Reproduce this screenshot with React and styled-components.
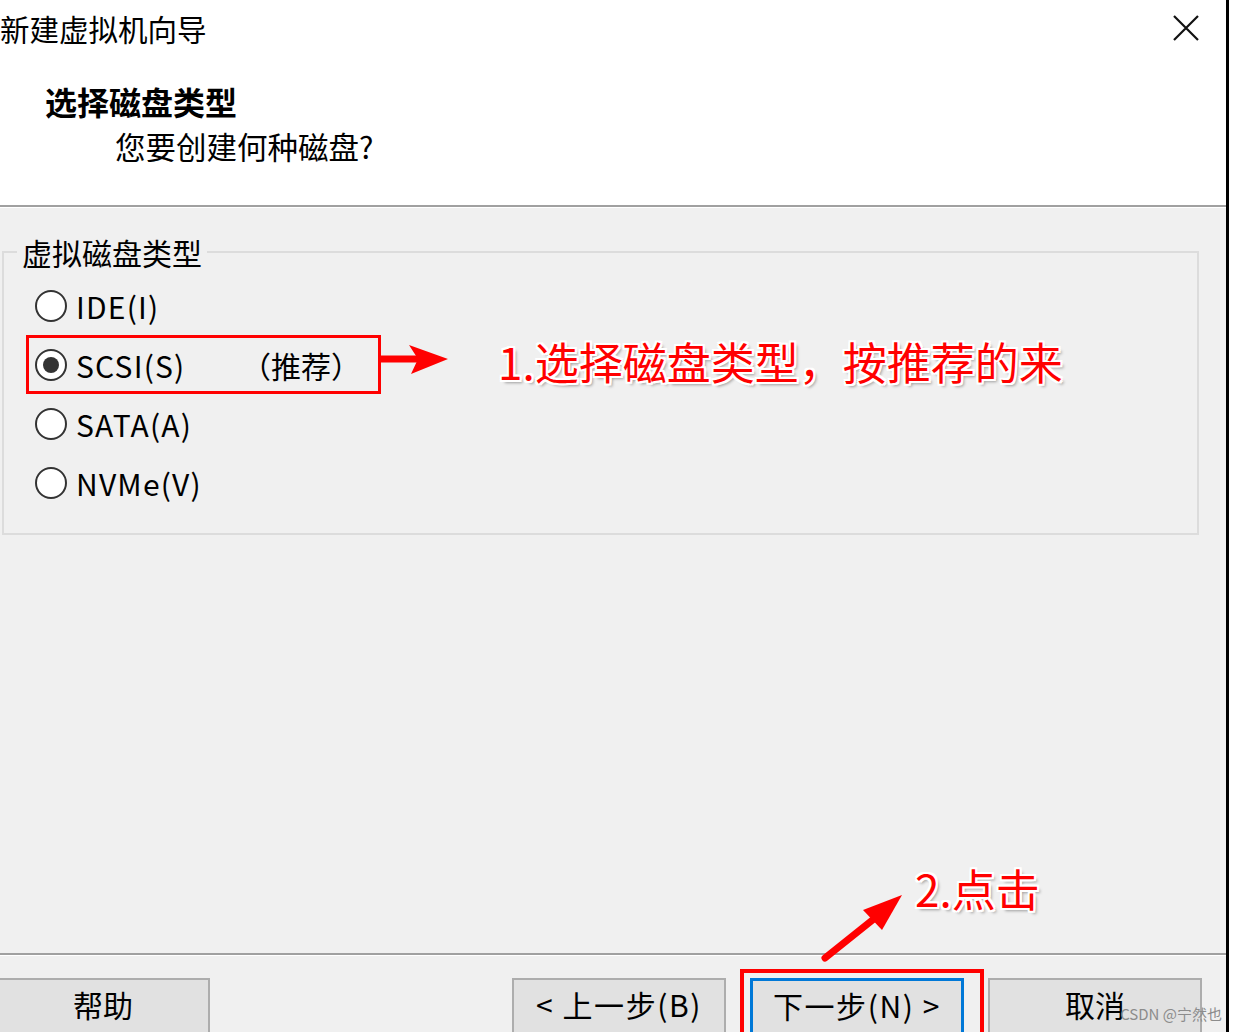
import React from "react";
import styled, { createGlobalStyle } from "styled-components";

const GlobalStyle = createGlobalStyle`
  html, body {
    margin: 0;
    padding: 0;
    background: #ffffff;
  }
  body {
    font-family: "Noto Sans CJK SC", "Liberation Sans", sans-serif;
    color: #000;
  }
`;

const Screen = styled.div`
  position: relative;
  display: flex;
  width: 1238px;
  height: 1032px;
  overflow: hidden;
  background: #ffffff;
`;

const Dialog = styled.div`
  display: flex;
  flex-direction: column;
  width: 1226px;
  height: 100%;
  background: #f0f0f0;
`;

const Edge = styled.div`
  width: 3px;
  height: 100%;
  background: #000;
`;

/* header */

const Header = styled.header`
  height: 205px;
  background: #ffffff;
`;

const TitleRow = styled.div`
  display: flex;
  align-items: center;
  justify-content: space-between;
  height: 56px;
  padding-right: 27px;
`;

const Title = styled.span`
  font-size: 29.5px;
  line-height: 40px;
`;

const Heading = styled.h1`
  margin: 25px 0 0 45px;
  font-size: 32px;
  line-height: 40px;
  font-weight: 700;
`;

const SubHeading = styled.p`
  margin: 5px 0 0 115px;
  font-size: 30.5px;
  line-height: 40px;
`;

const Rule = styled.div`
  height: 2px;
  background: #a0a0a0;
  box-shadow: 0 1px 0 #ffffff;
  flex: none;
`;

/* body */

const Body = styled.main`
  flex: 1;
  padding: 29px 27px 0 2px;
`;

const Group = styled.fieldset`
  margin: 0;
  padding: 0 0 21px 22px;
  border: 2px solid #dcdcdc;
`;

const Legend = styled.legend`
  margin-left: -9px;
  padding: 0 5px;
  font-size: 30px;
  line-height: 32px;
`;

const Options = styled.div`
  display: flex;
  flex-direction: column;
  margin-top: 8px;
`;

const Option = styled.label`
  display: flex;
  align-items: center;
  box-sizing: border-box;
  width: 355px;
  height: 59px;
  padding: 0 17px 0 6px;
  border: 3px solid ${(p) => (p.$marked ? "#ff0000" : "transparent")};
`;

const Radio = styled.span`
  display: flex;
  align-items: center;
  justify-content: center;
  box-sizing: border-box;
  width: 32px;
  height: 32px;
  border: 2px solid #333333;
  border-radius: 50%;
  background: #ffffff;
  flex: none;

  &::after {
    content: "";
    display: ${(p) => (p.$checked ? "block" : "none")};
    width: 16px;
    height: 16px;
    border-radius: 50%;
    background: #333333;
  }
`;

const OptionText = styled.span`
  margin-left: 9px;
  font-size: 30px;
  line-height: 40px;
  letter-spacing: 1.2px;
`;

const Tag = styled.span`
  margin-left: auto;
  font-size: 30px;
  line-height: 40px;
`;

/* footer */

const Footer = styled.footer`
  display: flex;
  height: 77px;
  box-sizing: border-box;
  padding: 23px 24px 0 0;
  gap: 24px;
`;

const Button = styled.button`
  position: relative;
  box-sizing: border-box;
  width: 214px;
  height: 60px;
  padding: 4px 0 0;
  display: flex;
  justify-content: center;
  align-items: flex-start;
  border: ${(p) => (p.$primary ? "3px solid #0078d7" : "2px solid #adadad")};
  background: #e1e1e1;
  font-family: "Noto Sans CJK SC", "Liberation Sans", sans-serif;
  font-size: 30px;
  line-height: 40px;
  letter-spacing: ${(p) => (p.$wide ? "1.6px" : "0")};
  white-space: pre;
  color: #000;
  flex: none;

  &:first-child {
    margin-left: -4px;
    margin-right: auto;
  }

  /* red annotation frame drawn round the button */
  &::after {
    content: "";
    display: ${(p) => (p.$flagged ? "block" : "none")};
    position: absolute;
    top: -12px;
    left: -13px;
    right: -23px;
    bottom: -20px;
    border: 4px solid #ff0000;
  }
`;

/* annotations */

const Callout = styled.div`
  position: absolute;
  left: ${(p) => p.$left}px;
  top: ${(p) => p.$top}px;
  color: #ff0000;
  font-size: 44px;
  line-height: 48px;
  white-space: nowrap;
  text-shadow: 2px 0 0 #fff, -2px 0 0 #fff, 0 2px 0 #fff, 0 -2px 0 #fff,
    2px 2px 0 #fff, -2px -2px 0 #fff, 2px -2px 0 #fff, -2px 2px 0 #fff,
    3px 3px 3px rgba(0, 0, 0, 0.35);
`;

const Arrow = styled.svg`
  position: absolute;
  left: ${(p) => p.$left}px;
  top: ${(p) => p.$top}px;
  overflow: visible;
`;

const Watermark = styled.span`
  position: absolute;
  right: 16px;
  bottom: 9px;
  font-size: 15px;
  line-height: 18px;
  color: #8c8c8c;
`;

const options = [
  { id: "ide", label: "IDE(I)" },
  { id: "scsi", label: "SCSI(S)", tag: "（推荐）", checked: true },
  { id: "sata", label: "SATA(A)" },
  { id: "nvme", label: "NVMe(V)" },
];

export default function App() {
  return (
    <>
      <GlobalStyle />
      <Screen>
        <Dialog>
          <Header>
            <TitleRow>
              <Title>新建虚拟机向导</Title>
              <svg width="26" height="26" viewBox="0 0 26 26">
                <path d="M1 1L25 25M25 1L1 25" stroke="#111" strokeWidth="2.2" />
              </svg>
            </TitleRow>
            <Heading>选择磁盘类型</Heading>
            <SubHeading>您要创建何种磁盘?</SubHeading>
          </Header>
          <Rule />
          <Body>
            <Group>
              <Legend>虚拟磁盘类型</Legend>
              <Options>
                {options.map((o) => (
                  <Option key={o.id} $marked={o.checked}>
                    <Radio $checked={o.checked} />
                    <OptionText>{o.label}</OptionText>
                    {o.tag && <Tag>{o.tag}</Tag>}
                  </Option>
                ))}
              </Options>
            </Group>
          </Body>
          <Rule />
          <Footer>
            <Button>帮助</Button>
            <Button $wide>&lt; 上一步(B)</Button>
            <Button $wide $primary $flagged>下一步(N) &gt;</Button>
            <Button>取消</Button>
          </Footer>
        </Dialog>
        <Edge />

        <Arrow $left={378} $top={340} width="72" height="40" viewBox="0 0 72 40">
          <path d="M0 19H40" stroke="#ff0000" strokeWidth="7" />
          <path d="M31 5L70 19L33 34L40 19Z" fill="#ff0000" />
        </Arrow>
        <Callout $left={498} $top={337}>1.选择磁盘类型，按推荐的来</Callout>

        <Arrow $left={820} $top={890} width="90" height="75" viewBox="0 0 90 75">
          <path d="M5 68L65 20" stroke="#ff0000" strokeWidth="7" strokeLinecap="round" />
          <path d="M82 5L43 20L62 40Z" fill="#ff0000" />
        </Arrow>
        <Callout $left={915} $top={864}>2.点击</Callout>

        <Watermark>CSDN @宁然也</Watermark>
      </Screen>
    </>
  );
}
